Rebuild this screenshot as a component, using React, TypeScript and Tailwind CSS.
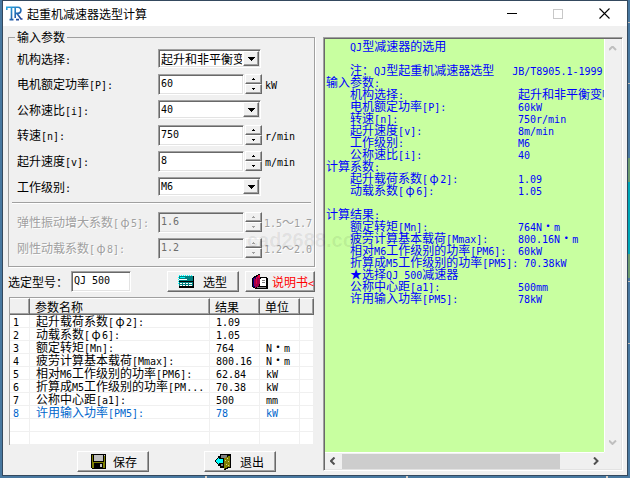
import React, { useId } from "react";
import type { ReactNode } from "react";

const RAISED =
  "border border-t-white border-l-white border-r-[#696969] border-b-[#696969] bg-[#f0f0f0] shadow-[inset_-1px_-1px_0_#a0a0a0]";
const SUNKEN =
  "border border-t-[#a0a0a0] border-l-[#a0a0a0] border-r-white border-b-white shadow-[inset_1px_1px_0_#696969,inset_-1px_-1px_0_#e3e3e3]";
const CJK = "font-['Noto_Sans_CJK_SC',sans-serif] text-[12px]";
const MONO = "font-['DejaVu_Sans_Mono','Noto_Sans_CJK_SC',monospace] text-[10px]";

/** Half-width characters take 6px, full-width ones 12px, as on a terminal grid. */
function Txt({ s }: { s: string }) {
  const parts = s.match(/[\x20-\x7e]+|[φ·～]|[^\x20-\x7eφ·～]+/g) ?? [];
  return (
    <>
      {parts.map((p, i) => {
        if (/^[\x20-\x7e]/.test(p)) {
          return <span key={i} className="font-['DejaVu_Sans_Mono',monospace] text-[10px] leading-[8px]">{p}</span>;
        }
        if (/^[φ·～]/.test(p)) {
          return <span key={i} className="inline-block w-3 text-center">{p}</span>;
        }
        return <span key={i}>{p}</span>;
      })}
    </>
  );
}

function SpinButton({ up, name, disabled }: { up?: boolean; name: string; disabled?: boolean }) {
  return (
    <button
      type="button"
      disabled={disabled}
      aria-label={name + (up ? " +" : " -")}
      className={`flex h-[10px] w-[17px] items-center justify-center ${RAISED}`}
    >
      <svg width="3" height="2" viewBox="0 0 3 2" shapeRendering="crispEdges" fill={disabled ? "#a0a0a0" : "#000"}>
        <path d={up ? "M1 0h1v1h1v1H0V1h1z" : "M0 0h3v1H2v1H1V1H0z"} />
      </svg>
    </button>
  );
}

interface Field {
  label: string;
  value: string;
  unit?: string;
  select?: boolean;
  disabled?: boolean;
}

const FIELDS: Field[] = [
  { label: "机构选择:", value: "起升和非平衡变幅机构", select: true },
  { label: "电机额定功率[P]:", value: "60", unit: "kW" },
  { label: "公称速比[i]:", value: "40", select: true },
  { label: "转速[n]:", value: "750", unit: "r/min" },
  { label: "起升速度[v]:", value: "8", unit: "m/min" },
  { label: "工作级别:", value: "M6", select: true },
];

const EXTRA: Field[] = [
  { label: "弹性振动增大系数[φ5]:", value: "1.6", unit: "1.5～1.7", disabled: true },
  { label: "刚性动载系数[φ8]:", value: "1.2", unit: "1.2～2.0", disabled: true },
];

function FieldRow({ f }: { f: Field }) {
  const id = useId();
  const wide = f.value.charCodeAt(0) > 255;
  return (
    <div
      className={`flex items-center ${f.select ? "h-[25px]" : "h-[26px]"} ${
        f.disabled ? "text-[#a0a0a0] [text-shadow:1px_1px_0_#fff]" : ""
      }`}
    >
      <label htmlFor={id} className="w-[141px] shrink-0 whitespace-nowrap">
        <Txt s={f.label} />
      </label>
      {f.select ? (
        <div className={`relative h-[19px] w-[103px] bg-white ${SUNKEN}`}>
          <select
            id={id}
            className={`block h-full w-full appearance-none overflow-hidden bg-transparent pr-[18px] pl-[2px] leading-[16px] outline-none ${
              wide ? CJK : MONO
            }`}
          >
            <option>{f.value}</option>
          </select>
          <span
            className={`pointer-events-none absolute top-px right-px bottom-px flex w-[16px] items-center justify-center ${RAISED}`}
          >
            <svg width="7" height="4" viewBox="0 0 7 4" shapeRendering="crispEdges">
              <path d="M0 0h7v1H6v1H5v1H4v1H3V3H2V2H1V1H0z" />
            </svg>
          </span>
        </div>
      ) : (
        <>
          <input
            id={id}
            type="text"
            defaultValue={f.value}
            disabled={f.disabled}
            className={`h-[21px] w-[86px] shrink-0 px-[2px] pb-[2px] outline-none ${MONO} ${SUNKEN} ${
              f.disabled ? "bg-[#f0f0f0] text-[#6d6d6d]" : "bg-white"
            }`}
          />
          <div className="ml-px flex flex-col">
            <SpinButton up name={f.label} disabled={f.disabled} />
            <SpinButton name={f.label} disabled={f.disabled} />
          </div>
          <span className={`whitespace-nowrap ${f.disabled ? "ml-[2px]" : "ml-[3px]"}`}>
            <Txt s={f.unit ?? ""} />
          </span>
        </>
      )}
    </div>
  );
}

const ROWS: [string, string, string][] = [
  ["起升载荷系数[φ2]:", "1.09", ""],
  ["动载系数[φ6]:", "1.05", ""],
  ["额定转矩[Mn]:", "764", "N·m"],
  ["疲劳计算基本载荷[Mmax]:", "800.16", "N·m"],
  ["相对M6工作级别的功率[PM6]:", "62.84", "kW"],
  ["折算成M5工作级别的功率[PM...", "70.38", "kW"],
  ["公称中心距[a1]:", "500", "mm"],
  ["许用输入功率[PM5]:", "78", "kW"],
  ["", "", ""],
  ["", "", ""],
];

function ResultTable() {
  const th =
    "h-[17px] border-t border-r border-b border-t-white border-r-[#696969] border-b-[#696969] bg-[#f0f0f0] p-0 pl-[5px] text-left leading-[15px] font-normal shadow-[inset_-1px_-1px_0_#a0a0a0]";
  const td = "h-[13px] border-r border-b border-[#f0f0f0] p-0 leading-[12px] whitespace-nowrap";
  return (
    <div className="mr-px ml-px border-t border-l border-[#a0a0a0] bg-white">
      <table className="w-full table-fixed border-separate border-spacing-0">
        <colgroup>
          <col className="w-[20px]" />
          <col className="w-[180px]" />
          <col className="w-[50px]" />
          <col className="w-[40px]" />
          <col />
        </colgroup>
        <thead>
          <tr>
            <th className={th} />
            <th className={th}>参数名称</th>
            <th className={th}>结果</th>
            <th className={th}>单位</th>
            <th className={th} />
          </tr>
        </thead>
        <tbody>
          {ROWS.map((row, i) => (
            <tr key={i} className={i === 7 ? "text-[#0066cc]" : ""}>
              <td className={td}>
                <div className="h-3 pl-[3px]">{i < 8 && <Txt s={String(i + 1)} />}</div>
              </td>
              {row.map((cell, c) => (
                <td key={c} className={td}>
                  <div className="h-3 pl-[6px]"><Txt s={cell} /></div>
                </td>
              ))}
              <td className={td} />
            </tr>
          ))}
        </tbody>
      </table>
    </div>
  );
}

const REPORT: [string, string?][] = [
  ["    QJ型减速器的选用"],
  [""],
  ["    注：QJ型起重机减速器选型   JB/T8905.1-1999"],
  ["输入参数:"],
  ["    机构选择:", "起升和非平衡变幅机构"],
  ["    电机额定功率[P]:", "60kW"],
  ["    转速[n]:", "750r/min"],
  ["    起升速度[v]:", "8m/min"],
  ["    工作级别:", "M6"],
  ["    公称速比[i]:", "40"],
  ["计算系数:"],
  ["    起升载荷系数[φ2]:", "1.09"],
  ["    动载系数[φ6]:", "1.05"],
  [""],
  ["计算结果:"],
  ["    额定转矩[Mn]:", "764N·m"],
  ["    疲劳计算基本载荷[Mmax]:", "800.16N·m"],
  ["    相对M6工作级别的功率[PM6]:", "60kW"],
  ["    折算成M5工作级别的功率[PM5]:", " 70.38kW"],
  ["    ★选择QJ 500减速器"],
  ["    公称中心距[a1]:", "500mm"],
  ["    许用输入功率[PM5]:", "78kW"],
];

function Report() {
  return (
    <section
      className={`mt-[11px] mb-px ml-2 grid min-w-0 flex-1 grid-cols-[minmax(0,1fr)_17px] grid-rows-[1fr_17px] p-px ${SUNKEN}`}
    >
      <div className="overflow-hidden bg-[#c8ffa0] pt-px pl-px whitespace-pre text-[#0000ff]">
        {REPORT.map(([name, value], i) => (
          <div key={i} className="h-3 leading-[12px]">
            {value ? (
              <>
                <span className="inline-block min-w-48"><Txt s={name} /></span>
                <Txt s={value} />
              </>
            ) : (
              <Txt s={name} />
            )}
          </div>
        ))}
      </div>
      <div className="flex flex-col items-center justify-between border-l border-white py-[7px]">
        <Chevron d="M0 4L3.5 0.5L7 4" color="#bfbfbf" w={8} h={5} />
        <Chevron d="M0 0.5L3.5 4L7 0.5" color="#bfbfbf" w={8} h={5} />
      </div>
      <div className="flex items-center border-t border-white px-[5px]">
        <Chevron d="M4.5 0.5L1 4L4.5 7.5" color="#505050" w={6} h={8} />
        <div className="mx-[6px] flex h-[15px] flex-1">
          <div className="w-[89%] bg-[#cdcdcd]" />
        </div>
        <Chevron d="M1 0.5L4.5 4L1 7.5" color="#505050" w={6} h={8} />
      </div>
      <div />
    </section>
  );
}

function Chevron({ d, color, w, h }: { d: string; color: string; w: number; h: number }) {
  return (
    <svg width={w} height={h} viewBox={`0 0 ${w} ${h}`} fill="none" stroke={color} strokeWidth="2" className="shrink-0">
      <path d={d} />
    </svg>
  );
}

function Push({ icon, children, className }: { icon: ReactNode; children: ReactNode; className: string }) {
  return (
    <button type="button" className={`flex h-[21px] shrink-0 items-center overflow-hidden whitespace-nowrap ${RAISED} ${className}`}>
      {icon}
      {children}
    </button>
  );
}

const CalcIcon = (
  <svg width="16" height="13" viewBox="0 0 16 13" shapeRendering="crispEdges" className="shrink-0">
    <path fill="#008080" d="M1 1h15v11H1z" />
    <path fill="#00ffff" d="M1 0h1v1H1zM3 0h1v1H3zM5 0h1v1H5zM7 0h1v1H7zM9 0h1v1H9zM11 0h1v1h-1zM13 0h1v1h-1zM0 2h1v1H0zM0 4h1v1H0zM0 6h1v1H0zM0 8h1v1H0zM2 2h5v1H2z" />
    <path fill="#000" d="M15 1h1v12h-1zM1 11h15v2H1zM1 6h14v1H1z" />
    <path fill="#fff" d="M1 4h8v1H1zM2 8h2v1H2zM5 8h2v1H5zM8 8h2v1H8zM2 10h2v1H2zM5 10h2v1H5zM8 10h2v1H8zM11 8h3v1h-3zM11 10h3v1h-3z" />
  </svg>
);

const BookIcon = (
  <svg width="16" height="15" viewBox="0 0 16 15" shapeRendering="crispEdges" className="shrink-0">
    <path fill="#000" d="M8 3h7v1h1v11H3v-1H1v-1H0V4h1V3h1V2h2V1h2V0h2v3z" />
    <path fill="#fff" d="M9 4h5v8H8V5h1z" />
    <path fill="#808080" d="M10 6h3v1h-3zM10 8h3v1h-3zM5 13h9v1H5z" />
    <path fill="#a00048" d="M1 4h2V3h2V2h2V1h1v9H7v2H6v1H4v1H3v-1H1z" />
    <path fill="#e00040" d="M6 1h2v3H6zM4 3h1v7H4z" />
    <path fill="#000080" d="M1 4h1v8h1v1H1zM3 3h1v2H3z" />
  </svg>
);

const SaveIcon = (
  <svg width="15" height="15" viewBox="0 0 15 15" shapeRendering="crispEdges" className="shrink-0">
    <path fill="#000" d="M0 0h15v15H1v-1H0z" />
    <path fill="#808000" d="M1 1h13v13H1z" />
    <path fill="#000" d="M2 0h11v8H2zM3 9h9v5H3z" />
    <path fill="#c0c0c0" d="M3 1h9v6H3zM9 10h2v3H9zM13 1h1v1h-1z" />
  </svg>
);

const ExitIcon = (
  <svg width="17" height="16" viewBox="0 0 17 16" shapeRendering="crispEdges" className="shrink-0">
    <path fill="#000" d="M5 0h11v14h-3v1h-2v1H9v-2H5z" />
    <path fill="#808080" d="M6 1h6v3H8v8H6z" />
    <path fill="#808000" d="M9 4h2V3h2V2h2v11h-3v1h-2v1H9z" />
    <path fill="#d4d088" d="M12 4h1v1h-1zM10 6h1v1h-1zM13 7h1v1h-1zM11 10h1v1h-1zM13 11h1v1h-1z" />
    <path fill="#000" d="M3 2h2v2h4v6H5v2H3v-2H2V9H1V8H0V6h1V5h1V4h1z" />
    <path fill="#00ffff" d="M3 4h1v1h4v4H4v1H3V9H2V8H1V6h1V5h1z" />
  </svg>
);

export default function App() {
  return (
    <div
      className={`min-h-screen bg-[#4878a0] bg-[linear-gradient(90deg,transparent_205px,#d8d0c8_205px,#d8d0c8_207px,transparent_207px,transparent_406px,#d8d0c8_406px,#d8d0c8_408px,transparent_408px,transparent_606px,#d8d0c8_606px,#d8d0c8_608px,transparent_608px),linear-gradient(transparent_22px,#c8c0b8_22px,#c8c0b8_23px,transparent_23px,transparent_83px,#c8c0b8_83px,#c8c0b8_84px,transparent_84px,transparent_158px,#6a9a70_158px,#6a9a70_182px,#00a8b8_182px,#00a8b8_254px,#6a9a70_254px,#6a9a70_278px,transparent_278px,transparent_281px,#c8c0b8_281px,#c8c0b8_282px,transparent_282px,transparent_343px,#c8c0b8_343px,#c8c0b8_344px,transparent_344px)] bg-[position:0_0,628px_0] bg-no-repeat pt-px pr-[3px] pb-[3px] pl-[3px] leading-[16px] text-black ${CJK}`}
    >
      <main className="relative bg-[#f0f0f0] pb-[3px] shadow-[0_0_0_1px_#34495e]">
        <header className="flex h-[25px] items-center bg-white pl-[3px]">
          <svg width="17" height="17" viewBox="0 0 17 17" aria-hidden="true">
            <defs>
              <linearGradient id="logo" x1="0" y1="0" x2="1" y2="1">
                <stop offset="0" stopColor="#2aa8e0" />
                <stop offset="1" stopColor="#203c90" />
              </linearGradient>
            </defs>
            <g fill="none" stroke="url(#logo)" strokeWidth="1.6">
              <path d="M0.8 5V2.2H12c4 0 4 6.2-.5 6.2H9.5M5.5 2.5V14M3.5 14.6h4M9.2 2.5V13M11 8.6l4 5.4h1.5M10 14.6h3" />
            </g>
          </svg>
          <h1 className="ml-1 flex-1">起重机减速器选型计算</h1>
          <button type="button" aria-label="最小化" className="flex w-[46px] justify-center">
            <span className="h-px w-[10px] bg-black" />
          </button>
          <button type="button" aria-label="最大化" disabled className="flex w-[46px] justify-center">
            <span className="size-[10px] border border-[#c8c8c8]" />
          </button>
          <button type="button" aria-label="关闭" className="flex w-[46px] justify-center">
            <svg width="11" height="11" viewBox="0 0 11 11" stroke="#000" strokeWidth="1.1">
              <path d="M0.5 0.5l10 10M10.5 0.5l-10 10" />
            </svg>
          </button>
        </header>

        <div className="flex pr-1 pl-[5px]">
          <div className="w-[307px] shrink-0">
            <fieldset className="mt-[3px] min-w-0 border border-[#a0a0a0] px-0 pt-px pb-[5px] shadow-[1px_1px_0_#fff]">
              <legend className="ml-[6px] px-[2px]">输入参数</legend>
              <div className="pl-2">
                {FIELDS.map((f) => <FieldRow key={f.label} f={f} />)}
              </div>
              <hr className="mx-[3px] mt-[3px] mb-[5px] h-[2px] border-t border-b border-t-[#a0a0a0] border-b-white" />
              <div className="pl-2">
                {EXTRA.map((f) => <FieldRow key={f.label} f={f} />)}
              </div>
            </fieldset>

            <div className="mt-1 flex items-center pb-[5px]">
              <label htmlFor="model" className="w-[63px] whitespace-nowrap">选定型号：</label>
              <input
                id="model"
                type="text"
                defaultValue="QJ 500"
                className={`h-[21px] w-[60px] bg-white px-[2px] pb-[2px] outline-none ${MONO} ${SUNKEN}`}
              />
              <Push icon={CalcIcon} className="ml-9 w-[72px] gap-[9px] pl-[10px]">选型</Push>
              <Push icon={BookIcon} className="ml-[6px] w-[70px] gap-1 pl-[6px] text-[#ff0000]">
                <span><Txt s="说明书<" /></span>
              </Push>
            </div>

            <ResultTable />

            <div className="mt-[6px] flex pl-[69px]">
              <Push icon={SaveIcon} className="w-[72px] gap-[7px] pl-[13px]">保存</Push>
              <Push icon={ExitIcon} className="ml-[55px] w-[72px] gap-2 pl-[10px]">退出</Push>
            </div>
          </div>
          <Report />
        </div>

        <div
          aria-hidden="true"
          className="pointer-events-none absolute top-[226px] left-[244px] font-['Liberation_Sans',sans-serif] text-[20px] leading-[26px] font-bold text-black/7"
        >
          cad2688.com
        </div>
      </main>
    </div>
  );
}
